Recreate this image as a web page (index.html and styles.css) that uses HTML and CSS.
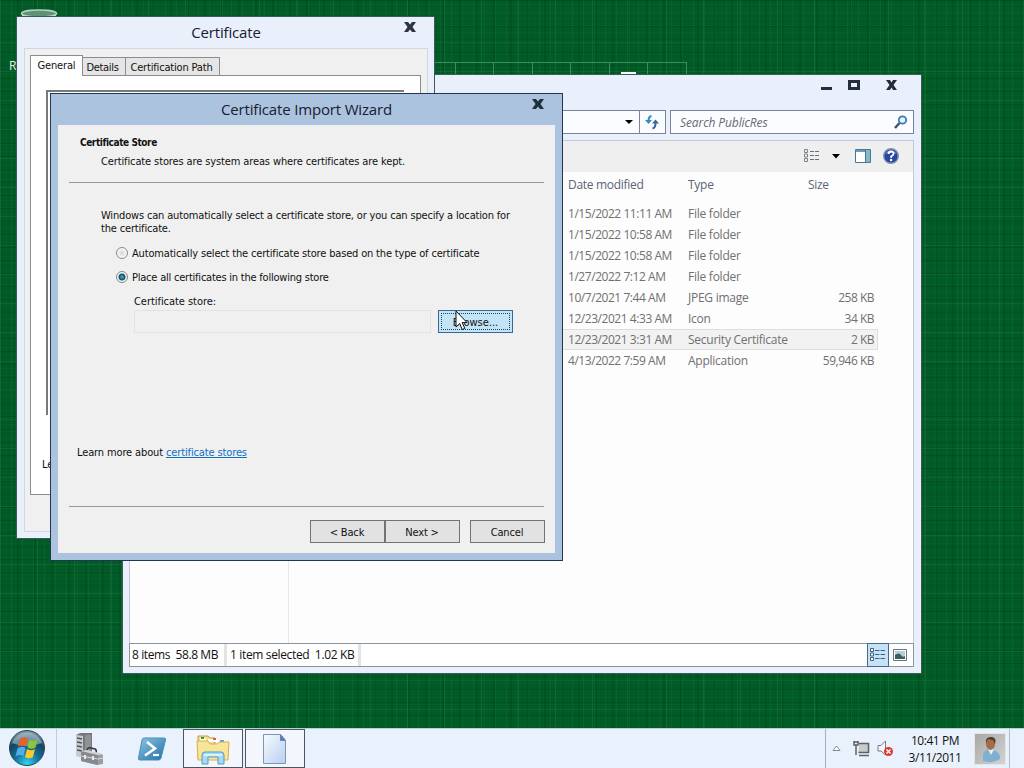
FILE: index.html
```html
<!DOCTYPE html>
<html lang="en">
<head>
  <meta charset="UTF-8" />
  <title>Desktop</title>
  <link rel="stylesheet" href="styles.css">
</head>
<body>
  <div class="desktop">

    <!-- Desktop background bits -->
    <svg class="bin" width="38" height="16" viewBox="0 0 38 16">
      <ellipse cx="19" cy="4.500" rx="17.500" ry="3.500" fill="#5e9276" stroke="#b9cfc1" stroke-width="1.500"/>
      <path d="M2 6l2 10h30l2-10c-8 3-26 3-34 0z" fill="#dce8e0"/>
    </svg>
    <span class="bin-label">R</span>
    <div class="tiles">
      <i></i><i></i><i></i><i></i><i></i><i class="lit"></i><i></i>
    </div>

    <!-- Explorer -->
    <div class="window explorer">
      <div class="explorer-title">
        <svg width="80" height="14" viewBox="0 0 80 14" fill="#252c3b">
          <path d="M1 9h11v3H1z"/>
          <path fill-rule="evenodd" d="M28 2h12v10H28zM31 5v4h6V5z"/>
          <path d="M66 2h4l1.500 2.500L73 2h4l-3.500 5 3.500 5h-4l-1.500-2.500L70 12h-4l3.500-5z"/>
        </svg>
      </div>
      <div class="address-row">
        <div class="address">
          <svg class="caret" width="10" height="6" viewBox="0 0 10 6"><path d="M1 1h8L5 5z" fill="#000"/></svg>
          <span class="refresh">
            <svg width="16" height="16" viewBox="0 0 16 16" fill="none" stroke-width="2">
              <path d="M7.500 2Q4.500 2.500 4.500 7" stroke="#2e8fbd"/>
              <path d="M1 6h7L4.500 10z" fill="#2e8fbd"/>
              <path d="M8.500 14.500Q11.500 14 11.500 9" stroke="#37699f"/>
              <path d="M8 9.500h7L11.500 5.500z" fill="#37699f"/>
            </svg>
          </span>
        </div>
        <div class="search">
          <span>Search PublicRes</span>
          <svg width="14" height="14" viewBox="0 0 14 14" fill="none">
            <path d="M1 13l4.500-5" stroke="#3d5272" stroke-width="2.500"/>
            <circle cx="8.500" cy="5" r="3.700" fill="#e7f5fd" stroke="#3f7ab8" stroke-width="1.800"/>
          </svg>
        </div>
      </div>
      <div class="explorer-body">
        <div class="toolbar">
          <svg class="tool-list" width="16" height="14" viewBox="0 0 16 14" fill="none" stroke="#66717c">
            <path d="M.5.500h3v3h-3zM.5 5h3v3h-3zM.5 9.500h3v3h-3z" stroke="#7c868d"/>
            <path d="M6 2.500h9M6 6.500h9M6 10.500h9" stroke-dasharray="4 1"/>
          </svg>
          <svg class="tool-caret" width="8" height="5" viewBox="0 0 8 5"><path d="M0 0h8L4 4.500z" fill="#000"/></svg>
          <svg class="tool-pane" width="16" height="14" viewBox="0 0 16 14">
            <path d="M.5.500h15v13H.5z" fill="#fff" stroke="#4f728f"/>
            <path d="M1 2h9" stroke="#6b9cc0" stroke-width="2"/>
            <path d="M10.500 1h4.500v12h-4.500z" fill="#7fbcc7"/>
            <path d="M10.500 1v12" stroke="#4f728f"/>
          </svg>
          <svg class="tool-help" width="16" height="16" viewBox="0 0 16 16">
            <circle cx="8" cy="8" r="7.300" fill="#2648a0" stroke="#8593ad" stroke-width="1.400"/>
            <path d="M2.500 6a6 6 0 0 1 11 0q-5-3-11 0z" fill="#7d9bd9"/>
            <path d="M5.700 6q0-2.500 2.400-2.500T10.500 6Q10.500 7 8.100 8.500v1.300" fill="none" stroke="#fff" stroke-width="1.800"/>
            <circle cx="8.100" cy="12" r="1.200" fill="#fff"/>
          </svg>
        </div>
        <div class="panes">
          <div class="nav-pane"></div>
          <div class="files">
            <div class="row head"><span>Date modified</span><span>Type</span><span>Size</span></div>
            <div class="row"><span>1/15/2022 11:11 AM</span><span>File folder</span><span></span></div>
            <div class="row"><span>1/15/2022 10:58 AM</span><span>File folder</span><span></span></div>
            <div class="row"><span>1/15/2022 10:58 AM</span><span>File folder</span><span></span></div>
            <div class="row"><span>1/27/2022 7:12 AM</span><span>File folder</span><span></span></div>
            <div class="row"><span>10/7/2021 7:44 AM</span><span>JPEG image</span><span>258 KB</span></div>
            <div class="row"><span>12/23/2021 4:33 AM</span><span>Icon</span><span>34 KB</span></div>
            <div class="row selected"><span>12/23/2021 3:31 AM</span><span>Security Certificate</span><span>2 KB</span></div>
            <div class="row"><span>4/13/2022 7:59 AM</span><span>Application</span><span>59,946 KB</span></div>
          </div>
        </div>
        <div class="status">
          <span class="status-cell count">8 items&nbsp; 58.8 MB</span>
          <span class="status-cell picked">1 item selected&nbsp; 1.02 KB</span>
          <span class="view view-on">
            <svg width="16" height="14" viewBox="0 0 16 14" fill="none" stroke="#3f607e">
              <path d="M.5.500h3v3h-3zM.5 5h3v3h-3zM.5 9.500h3v3h-3z" fill="#fff"/>
              <path d="M5 2.500h10M5 6.500h10M5 10.500h10" stroke-dasharray="4.500 1"/>
            </svg>
          </span>
          <span class="view">
            <svg width="14" height="12" viewBox="0 0 14 12">
              <path d="M.5.500h13v11H.5z" fill="#fff" stroke="#66777f"/>
              <path d="M2 2h10v8H2z" fill="#b5d0d8"/>
              <path d="M2 6q4-3 6 0t4 1v3H2z" fill="#3d5f62"/>
            </svg>
          </span>
        </div>
      </div>
    </div>

    <!-- Certificate properties -->
    <div class="window certificate">
      <div class="dialog-title">Certificate</div>
      <svg class="close" width="12" height="10" viewBox="0 0 12 10"><path d="M0 0h4l2 2.500L8 0h4L8.500 5l3.500 5H8L6 7.500 4 10H0l3.500-5z" fill="#2d3443"/></svg>
      <div class="certificate-body">
        <div class="tabs">
          <span class="tab active">General</span>
          <span class="tab details">Details</span>
          <span class="tab path">Certification Path</span>
        </div>
        <div class="tab-panel">
          <div class="cert-info"></div>
          <p>Learn more about <a>certificates</a></p>
        </div>
      </div>
    </div>

    <!-- Import wizard -->
    <div class="window wizard">
      <div class="dialog-title">Certificate Import Wizard</div>
      <svg class="close" width="12" height="10" viewBox="0 0 12 10"><path d="M0 0h4l2 2.500L8 0h4L8.500 5l3.500 5H8L6 7.500 4 10H0l3.500-5z" fill="#20303c"/></svg>
      <div class="wizard-body">
        <div class="wizard-head">
          <h2>Certificate Store</h2>
          <p>Certificate stores are system areas where certificates are kept.</p>
        </div>
        <div class="wizard-main">
          <p class="intro">Windows can automatically select a certificate store, or you can specify a location for<br>the certificate.</p>
          <div class="option"><span class="radio"></span><span>Automatically select the certificate store based on the type of certificate</span></div>
          <div class="option"><span class="radio checked"></span><span class="place-text">Place all certificates in the following store</span></div>
          <div class="store-label">Certificate store:</div>
          <div class="store-row">
            <div class="store-input"></div>
            <div class="browse">Browse...</div>
          </div>
          <p class="learn">Learn more about <a>certificate stores</a></p>
        </div>
        <div class="wizard-foot">
          <div class="button">&lt; Back</div>
          <div class="button next">Next &gt;</div>
          <div class="button cancel">Cancel</div>
        </div>
      </div>
    </div>

    <svg class="cursor" width="13" height="21" viewBox="0 0 13 21">
      <path d="M1 1v16l3.700-3.500L7.200 19.500l2.600-1.100-2.600-5.800H12z" fill="#fff" stroke="#111"/>
    </svg>

    <!-- Taskbar -->
    <div class="taskbar">
      <div class="start">
        <svg width="38" height="38" viewBox="0 0 38 38">
          <defs>
            <radialGradient id="orb" cx=".5" cy=".95" r=".9">
              <stop offset="0" stop-color="#35d4f2"/>
              <stop offset=".4" stop-color="#14729d"/>
              <stop offset=".75" stop-color="#17425f"/>
              <stop offset="1" stop-color="#7c97a5"/>
            </radialGradient>
          </defs>
          <circle cx="19" cy="19" r="17.500" fill="url(#orb)" stroke="#24485c"/>
          <path d="M4 14A16 16 0 0 1 34 14Q19 20 4 14z" fill="#c5d7de" opacity=".5"/>
          <path d="M12 10q4-3 8-.5l-2 8q-4-2-8 .5z" fill="#e8602c"/>
          <path d="M21.500 10.500q4 2.500 8 0l-2 8q-4 2.500-8 0z" fill="#8cc63c"/>
          <path d="M9.500 19.500q4-3 8-.5l-2 8q-4-2-8 .5z" fill="#52aee9"/>
          <path d="M19 20q4 2.500 8 0l-2 8q-4 2.500-8 0z" fill="#fbc928"/>
        </svg>
      </div>
      <div class="task">
        <svg width="32" height="34" viewBox="0 0 32 34">
          <path d="M3 3l4-2h12v23L9 25l-6-2z" fill="#75797c"/>
          <path d="M3 3l7 1v22l-7-2z" fill="#c7cbce"/>
          <path d="M4 6l5 1M4 10l5 1M4 14l5 1M4 18l5 1" stroke="#50575c" stroke-width="1.500"/>
          <path d="M12 3h6v17h-6z" fill="#8e9294"/>
          <path d="M14 19q0-4 4-3l4 1q2 1 1 4" fill="none" stroke="#34383a" stroke-width="1.500"/>
          <path d="M8 19l18 2 4 2v9l-6 1-16-4z" fill="#9a9ea0"/>
          <path d="M8 19l17 3v11L8 29z" fill="#868a8d"/>
          <path d="M8 19l6-1 16 4-5 1z" fill="#d1d5d7"/>
          <path d="M8 24l17 3 5-1" fill="none" stroke="#d6dadd"/>
          <path d="M12 23v4M20 24v4" stroke="#e7eaec" stroke-width="2"/>
        </svg>
      </div>
      <div class="task">
        <svg width="30" height="26" viewBox="0 0 30 26">
          <defs>
            <linearGradient id="ps" x1="0" y1="0" x2="1" y2="1">
              <stop offset="0" stop-color="#8cc5e4"/>
              <stop offset="1" stop-color="#206fa8"/>
            </linearGradient>
          </defs>
          <path d="M7 2h20q2 0 1.500 2L24 22q-.5 2-2.500 2H3q-2 0-1.500-2L5 4q.5-2 2-2z" fill="url(#ps)" stroke="#4a8db5"/>
          <path d="M10 6l8 6.500-10 7" fill="none" stroke="#fff" stroke-width="2.600"/>
          <path d="M16 19h6" stroke="#fff" stroke-width="2.200"/>
        </svg>
      </div>
      <div class="task open">
        <svg width="34" height="32" viewBox="0 0 34 32">
          <path d="M2 3h10l2 2h5v20H2z" fill="#f4dc86" stroke="#c49e47"/>
          <path d="M4 5h6v3H4z" fill="#fff"/><path d="M5 4h3v2H5z" fill="#2f9b50"/>
          <path d="M12 6h9v3h-9z" fill="#fff"/><path d="M17 5h3v2h-3z" fill="#e26039"/>
          <path d="M20 7h9v3h-9z" fill="#fff"/><path d="M24 7h4v2h-4z" fill="#50a6d8"/>
          <path d="M1 8h11l2 3h7l2-2h10l-1 18H2z" fill="#f8e697" stroke="#d3ae56"/>
          <path d="M6 31V22q0-3 3-3h16q3 0 3 3v9h-6v-7H12v7z" fill="#a9daf1" stroke="#4c9fc9"/>
          <path d="M8 22h18" stroke="#e8f8ff" stroke-width="1.500"/>
        </svg>
      </div>
      <div class="task open doc">
        <svg width="26" height="32" viewBox="0 0 26 32">
          <defs>
            <linearGradient id="sheet" x1="0" y1="0" x2="1" y2="1">
              <stop offset="0" stop-color="#f7fbff"/>
              <stop offset="1" stop-color="#b7cff0"/>
            </linearGradient>
          </defs>
          <path d="M1.500 1.500h17l5 6v23h-22z" fill="url(#sheet)" stroke="#8195b4"/>
          <path d="M18.500 1.500v6h5z" fill="#587abb" stroke="#6b84b2"/>
        </svg>
      </div>
      <div class="tray">
        <svg class="tray-up" width="9" height="7" viewBox="0 0 9 7"><path d="M4.500 1L8 5.500H1z" fill="#fff" stroke="#858b94"/></svg>
        <svg class="tray-net" width="17" height="17" viewBox="0 0 17 17" fill="none" stroke="#5d6165">
          <path d="M6 3.500h9.500v9H5.500" fill="#c7cbce" stroke-width="1.500"/>
          <path d="M6 15.500h10" stroke-width="1.500"/>
          <path d="M1 1v4h4V1M3 5v10M2 1v2M4 1v2" stroke-width="1.500"/>
        </svg>
        <svg class="tray-sound" width="17" height="17" viewBox="0 0 17 17">
          <path d="M1 5.500h3L8.500 1v14L4 11H1z" fill="#f5f6f8" stroke="#757b80"/>
          <circle cx="11.500" cy="11.500" r="4.500" fill="#de3631"/>
          <path d="M9.500 9.500l4 4M13.500 9.500l-4 4" stroke="#fff" stroke-width="1.500"/>
        </svg>
        <div class="clock">10:41 PM<br>3/11/2011</div>
        <div class="avatar">
          <svg width="30" height="30" viewBox="0 0 30 30">
            <path d="M8 27q-1-11 5-12l6 1q7 3 6 9-7 5-17 2z" fill="#7fb0cf"/>
            <path d="M13 15l3 6 3-6z" fill="#e8f2f7"/>
            <ellipse cx="15.500" cy="9.500" rx="4.600" ry="6.500" fill="#a06e49"/>
            <path d="M11 9q-1-6 5-6t4 7l-2-4-5-1z" fill="#503a2b"/>
          </svg>
        </div>
        <div class="show-desktop"></div>
      </div>
    </div>
  </div>
</body>
</html>
```
FILE: styles.css
```css
* {
  box-sizing: border-box;
}

body {
  margin: 0;
  font-family: "Open Sans", "Noto Sans", sans-serif;
  font-size: 12px;
  color: #111;
}

svg {
  display: block;
  flex: none;
}

p, h2 {
  margin: 0;
}

.desktop {
  position: relative;
  width: 1024px;
  height: 768px;
  overflow: hidden;
  background-color: #015b27;
  background-image:
    repeating-linear-gradient(90deg, rgba(70, 150, 90, 0.2) 0 1px, transparent 1px 37px),
    repeating-linear-gradient(90deg, rgba(60, 140, 80, 0.14) 0 1px, transparent 1px 11px),
    repeating-linear-gradient(90deg, rgba(0, 40, 10, 0.16) 0 2px, transparent 2px 17px),
    repeating-linear-gradient(0deg, rgba(70, 150, 90, 0.18) 0 1px, transparent 1px 29px),
    repeating-linear-gradient(0deg, rgba(0, 40, 10, 0.22) 0 1px, transparent 1px 13px),
    repeating-linear-gradient(0deg, rgba(60, 130, 80, 0.08) 0 1px, transparent 1px 7px);
}

.bin {
  position: absolute;
  left: 20px;
  top: 9px;
}

.bin-label {
  position: absolute;
  left: 9px;
  top: 57px;
  color: #e4efe7;
}

.tiles {
  position: absolute;
  left: 417px;
  top: 62px;
  display: flex;
}

.tiles i {
  width: 38.500px;
  height: 14px;
  border: 1px solid #3f8d5d;
  border-left: none;
}

.tiles .lit {
  background: linear-gradient(#fff, #fff) 11px 9px / 15px 3px no-repeat;
}

/* Windows */
.window {
  position: absolute;
  display: flex;
  flex-direction: column;
  background: #eaeffc;
  border: 1px solid #3b5a58;
}

.dialog-title {
  text-align: center;
  font-family: "Open Sans", "Noto Sans", sans-serif;
  font-size: 15px;
  letter-spacing: -0.17px;
  line-height: 31px;
  color: #17202f;
}

.close {
  position: absolute;
  top: 5px;
  right: 18px;
}

/* Explorer */
.explorer {
  left: 122px;
  top: 74px;
  width: 800px;
  height: 600px;
  padding: 0 7px 6px 6px;
}

.explorer-title {
  display: flex;
  justify-content: flex-end;
  height: 35px;
  padding: 3px 14px 0 0;
}

.address-row {
  display: flex;
  gap: 4px;
  height: 24px;
}

.address,
.search {
  display: flex;
  align-items: center;
  border: 1px solid #78849b;
  background: #fbfcff;
}

.address {
  flex: 1;
  justify-content: flex-end;
}

.refresh {
  display: flex;
  align-items: center;
  height: 22px;
  margin-left: 5px;
  padding: 0 5px 0 4px;
  border-left: 1px solid #78849b;
}

.search {
  justify-content: space-between;
  width: 244px;
  padding: 0 5px 0 9px;
  font-style: italic;
  letter-spacing: -0.1px;
  color: #666b73;
}

.explorer-body {
  flex: 1;
  display: flex;
  flex-direction: column;
  margin-top: 6px;
  border: 1px solid #c3c8d7;
}

.toolbar {
  display: flex;
  align-items: center;
  justify-content: flex-end;
  height: 31px;
  padding: 0 14px 1px 0;
  background: #efefef;
}

.tool-caret {
  margin-left: 12px;
}

.tool-pane {
  margin-left: 15px;
}

.tool-help {
  margin-left: 12px;
}

.panes {
  flex: 1;
  display: flex;
  background: #fdfdfe;
}

.nav-pane {
  width: 159px;
  border-right: 1px solid #e6e8f0;
}

.files {
  flex: 1;
  padding: 2px 35px 0 0;
  color: #707070;
}

.row {
  display: grid;
  grid-template-columns: 120px 120px 66px;
  justify-content: end;
  height: 21px;
  padding-right: 3px;
  border: 1px solid transparent;
  letter-spacing: -0.45px;
  line-height: 20px;
  white-space: nowrap;
}

.row span:nth-child(2) {
  letter-spacing: -0.25px;
}

.row span:last-child {
  text-align: right;
  letter-spacing: -0.5px;
}

.head {
  height: 29px;
  color: #5b6473;
  line-height: 20px;
  letter-spacing: -0.3px;
}

.row.head span:last-child {
  text-align: left;
  letter-spacing: -0.3px;
}

.selected {
  background: #f2f2f2;
  border-color: #dedede;
}

.status {
  display: flex;
  align-items: center;
  height: 24px;
  margin: 0 -1px -1px;
  border: 1px solid #8d939b;
  background: #fff;
}

.status-cell {
  height: 22px;
  border-right: 3px solid #e3e3e3;
  line-height: 22px;
  white-space: nowrap;
}

.count {
  width: 97px;
  padding-left: 2px;
  letter-spacing: -0.4px;
}

.picked {
  width: 134px;
  padding-left: 3px;
  margin-right: auto;
  letter-spacing: -0.35px;
}

.view {
  display: flex;
  align-items: center;
  justify-content: center;
  width: 22px;
  height: 24px;
  margin-right: 2px;
}

.view-on {
  background: #c5e2f7;
  border: 1px solid #45698c;
  margin-right: 0;
}

/* Dialogs */
.certificate,
.wizard {
  font-family: "DejaVu Sans Condensed", "DejaVu Sans", sans-serif;
  font-size: 11px;
  letter-spacing: -0.17px;
}

.certificate {
  left: 16px;
  top: 16px;
  width: 419px;
  height: 523px;
  padding: 0 6px 6px 7px;
}

.certificate-body {
  flex: 1;
  padding: 6px 5px 0;
  background: #f0f0f0;
  border: 1px solid #d1d6e3;
}

.tabs {
  display: flex;
  align-items: flex-end;
  height: 20px;
}

.tab {
  height: 18px;
  border: 1px solid #898c93;
  border-bottom: none;
  border-left: none;
  background: #e5e5e5;
  text-align: center;
  line-height: 20px;
  white-space: nowrap;
}

.active {
  position: relative;
  width: 53px;
  height: 21px;
  margin-bottom: -1px;
  border-left: 1px solid #898c93;
  background: #fff;
}

.details {
  width: 43px;
  padding-right: 3px;
  letter-spacing: -0.3px;
}

.path {
  width: 94px;
  padding-right: 2px;
}

.tab-panel {
  width: 391px;
  height: 420px;
  padding: 14px 16px 0 15px;
  border: 1px solid #898c93;
  background: #fff;
}

.cert-info {
  height: 325px;
  border: 2px solid #77797c;
  border-right: none;
  border-bottom: none;
}

.tab-panel p {
  margin: 43px 0 0 -4px;
}

.tab-panel a,
.learn a {
  color: #0f6fc5;
  text-decoration: underline;
}

.wizard {
  left: 50px;
  top: 93px;
  width: 513px;
  height: 468px;
  padding: 0 7px 7px;
  background: #abc3df;
  border-color: #20374f;
}

.wizard-body {
  flex: 1;
  display: flex;
  flex-direction: column;
  background: #f0f0f0;
  padding: 0 11px;
}

.wizard-head {
  height: 58px;
  padding: 11px 0 0 11px;
  border-bottom: 1px solid #96999b;
}

.wizard-head h2 {
  font-size: 10px;
  letter-spacing: -0.42px;
  line-height: 14px;
}

.wizard-head p {
  margin: 4px 0 0 21px;
  letter-spacing: -0.12px;
  line-height: 15px;
}

.wizard-main {
  flex: 1;
  padding: 26px 0 0 32px;
  white-space: nowrap;
}

.intro {
  line-height: 13px;
}

.option {
  display: flex;
  align-items: center;
  gap: 4px;
  height: 24px;
  margin-left: 15px;
}

.intro + .option {
  margin-top: 6px;
}

.place-text {
  letter-spacing: -0.22px;
}

.radio {
  width: 12px;
  height: 12px;
  border: 1px solid #85898c;
  border-radius: 50%;
  background: radial-gradient(circle, #d3d6d8, #f8f8f8 65%);
}

.checked {
  background: radial-gradient(circle at 50% 50%, #2aa0ad 0 1px, #144a63 3px, #f4f4f4 4px);
}

.store-label {
  margin-left: 33px;
  letter-spacing: -0.05px;
  line-height: 25px;
}

.store-row {
  display: flex;
  gap: 7px;
  margin: -4px 0 0 33px;
}

.store-input {
  width: 297px;
  height: 23px;
  border: 1px solid #e2e2e2;
}

.browse {
  width: 75px;
  height: 23px;
  padding: 2px;
  border: 1px solid #35699a;
  background: #c3e4f6;
  text-align: center;
  letter-spacing: 0;
  line-height: 19px;
  outline: 1px dotted #24445c;
  outline-offset: -4px;
}

.learn {
  margin: 112px 0 0 -24px;
  letter-spacing: -0.13px;
  line-height: 15px;
}

.wizard-foot {
  display: flex;
  justify-content: flex-end;
  height: 47px;
  padding-top: 13px;
  border-top: 1px solid #96999b;
}

.button {
  width: 75px;
  height: 23px;
  padding-right: 1px;
  border: 1px solid #737373;
  background: #e2e2e2;
  text-align: center;
  line-height: 23px;
}

.cancel {
  margin-left: 10px;
  margin-right: -1px;
}

.cursor {
  position: absolute;
  left: 455px;
  top: 310px;
}

/* Taskbar */
.taskbar {
  position: absolute;
  left: 0;
  right: 0;
  bottom: 0;
  display: flex;
  height: 40px;
  background: #e9f1fc;
  border-top: 1px solid #b7d3cc;
}

.start {
  width: 57px;
  padding-left: 8px;
  border-right: 1px solid #c3cbd8;
}

.task {
  display: flex;
  align-items: center;
  justify-content: center;
  width: 63px;
}

.open {
  width: 60px;
  border: 1px solid #4c5663;
  background: #f3f6fd;
}

.doc {
  margin-left: 2px;
}

.tray {
  display: flex;
  align-items: center;
  margin-left: auto;
  border-left: 1px solid #a5afbd;
}

.tray-up {
  margin-left: 6px;
}

.tray-net {
  margin-left: 12px;
}

.tray-sound {
  margin-left: 7px;
}

.clock {
  width: 80px;
  padding-left: 2px;
  text-align: center;
  letter-spacing: -0.45px;
  line-height: 17px;
}

.avatar {
  width: 32px;
  height: 32px;
  background: linear-gradient(135deg, #aaa8a7, #d3d3d3);
  border: 1px solid #e5e5e8;
}

.show-desktop {
  width: 15px;
  height: 39px;
  margin-left: 3px;
  border-left: 1px solid #b4bdca;
}
```
